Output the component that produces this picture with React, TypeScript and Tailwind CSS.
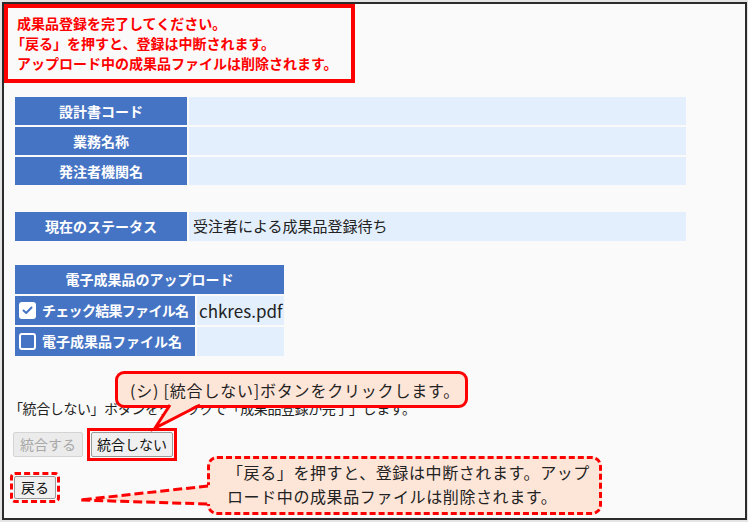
import React from "react";

const rows = ["設計書コード", "業務名称", "発注者機関名"];

function CheckBox({ checked }: { checked: boolean }) {
  if (checked) {
    return (
      <span className="w-[17px] h-[17px] rounded-[3px] bg-white flex items-center justify-center shrink-0">
        <svg width="11" height="9" viewBox="0 0 11 9">
          <path d="M1.5 4.5 L4.2 7 L9.5 1.5" fill="none" stroke="#4674c4" strokeWidth="2" strokeLinecap="round" strokeLinejoin="round" />
        </svg>
      </span>
    );
  }
  return <span className="w-[17px] h-[17px] rounded-[3px] border-2 border-white shrink-0" />;
}

export default function App() {
  return (
    <div className="w-[748px] h-[522px] bg-[#e4e4e4] pt-[2px] pl-[2px] overflow-hidden font-['Noto_Sans_CJK_JP',sans-serif]">
      <div className="relative w-[745px] h-[518px] border-2 border-[#2b2b2b] bg-[#fafafa]">
        {/* warning */}
        <div className="w-[351px] h-[79px] border-4 border-[#ff0000] pl-[9px] pt-[5px] text-[14px] leading-[20px] font-bold text-[#ff0000]">
          <p>成果品登録を完了してください。</p>
          <p className="-ml-[6px]">「戻る」を押すと、登録は中断されます。</p>
          <p>アップロード中の成果品ファイルは削除されます。</p>
        </div>

        {/* info table */}
        <div className="ml-[11px] mt-[14px] flex flex-col gap-[2px]">
          {rows.map((r) => (
            <div key={r} className="flex gap-[2px] h-[28px]">
              <div className="w-[172px] bg-[#4674c4] text-white font-bold text-[14px] flex items-center justify-center">{r}</div>
              <div className="w-[497px] bg-[#e3effc]" />
            </div>
          ))}
        </div>

        <div className="ml-[11px] mt-[27px] flex gap-[2px] h-[29px]">
          <div className="w-[172px] bg-[#4674c4] text-white font-bold text-[14px] flex items-center justify-center">現在のステータス</div>
          <div className="w-[497px] bg-[#e3effc] text-[15px] text-[#222] flex items-center pl-[4px]">受注者による成果品登録待ち</div>
        </div>

        {/* upload table */}
        <div className="ml-[11px] mt-[24px] w-[269px] flex flex-col gap-[2px]">
          <div className="h-[29px] bg-[#4674c4] text-white font-bold text-[14px] flex items-center justify-center">電子成果品のアップロード</div>
          <div className="flex gap-[2px] h-[29px]">
            <div className="w-[180px] bg-[#4674c4] text-white font-bold text-[14px] flex items-center gap-[6px] pl-[4px] tracking-[-0.7px]">
              <CheckBox checked />
              チェック結果ファイル名
            </div>
            <div className="flex-1 bg-[#e3effc] text-[17px] text-[#222] flex items-center pl-[2px]">chkres.pdf</div>
          </div>
          <div className="flex gap-[2px] h-[29px]">
            <div className="w-[180px] bg-[#4674c4] text-white font-bold text-[14px] flex items-center gap-[6px] pl-[4px]">
              <CheckBox checked={false} />
              電子成果品ファイル名
            </div>
            <div className="flex-1 bg-[#e3effc]" />
          </div>
        </div>

        <p className="ml-[5px] mt-[42px] text-[14px] leading-[20px] text-[#222] tracking-[-0.4px]">
          「統合しない」ボタンをクリックで「成果品登録が完了」します。
        </p>

        {/* buttons */}
        <div className="ml-[9px] mt-[10px] flex items-center gap-[4px]">
          <button disabled className="w-[70px] h-[25px] bg-[#ebebeb] border border-[#d4d4d4] rounded-[2px] text-[14px] text-[#a8a8a8]">統合する</button>
          <span className="border-[3px] border-[#ff0000] p-[1px]">
            <button className="w-[82px] h-[25px] bg-[#f0f0f0] border border-[#9a9a9a] rounded-[2px] text-[14px] text-[#111] block">統合しない</button>
          </span>
        </div>

        <div className="ml-[6px] mt-[11px] w-fit border-[3px] border-dashed border-[#ff0000] rounded-[5px] p-[1px]">
          <button className="w-[42px] h-[23px] bg-[#f0f0f0] border border-[#9a9a9a] rounded-[2px] text-[14px] text-[#111] block">戻る</button>
        </div>

        {/* callout 1 */}
        <div className="absolute left-[111px] top-[367px] w-[353px] h-[37px] border-[3px] border-[#ff0000] rounded-[9px] bg-[#fde5d8] pl-[12px] flex items-center text-[16px] text-[#222] tracking-[0.8px] whitespace-nowrap">
          (シ) [統合しない]ボタンをクリックします。
        </div>

        {/* callout 2 */}
        <div className="absolute left-[203px] top-[452px] w-[395px] h-[59px] border-[3px] border-dashed border-[#ff0000] rounded-[10px] bg-[#fde5d8] pl-[17px] pt-[1px] text-[16px] leading-[24px] text-[#222] tracking-[0.6px] whitespace-nowrap">
          <p>「戻る」を押すと、登録は中断されます。アップ</p>
          <p>ロード中の成果品ファイルは削除されます。</p>
        </div>

        {/* tails */}
        <svg className="absolute inset-0 pointer-events-none" width="745" height="518">
          <polygon points="166,399 151,424 196,399" fill="#fde5d8" />
          <polyline points="166,401 151,424 196,401" fill="none" stroke="#ff0000" strokeWidth="3" strokeLinejoin="miter" />
          <polygon points="206,481 76,496 206,500" fill="#fde5d8" />
          <polyline points="204,482 76,496 204,500" fill="none" stroke="#ff0000" strokeWidth="3" strokeDasharray="9 4" />
        </svg>
      </div>
    </div>
  );
}
